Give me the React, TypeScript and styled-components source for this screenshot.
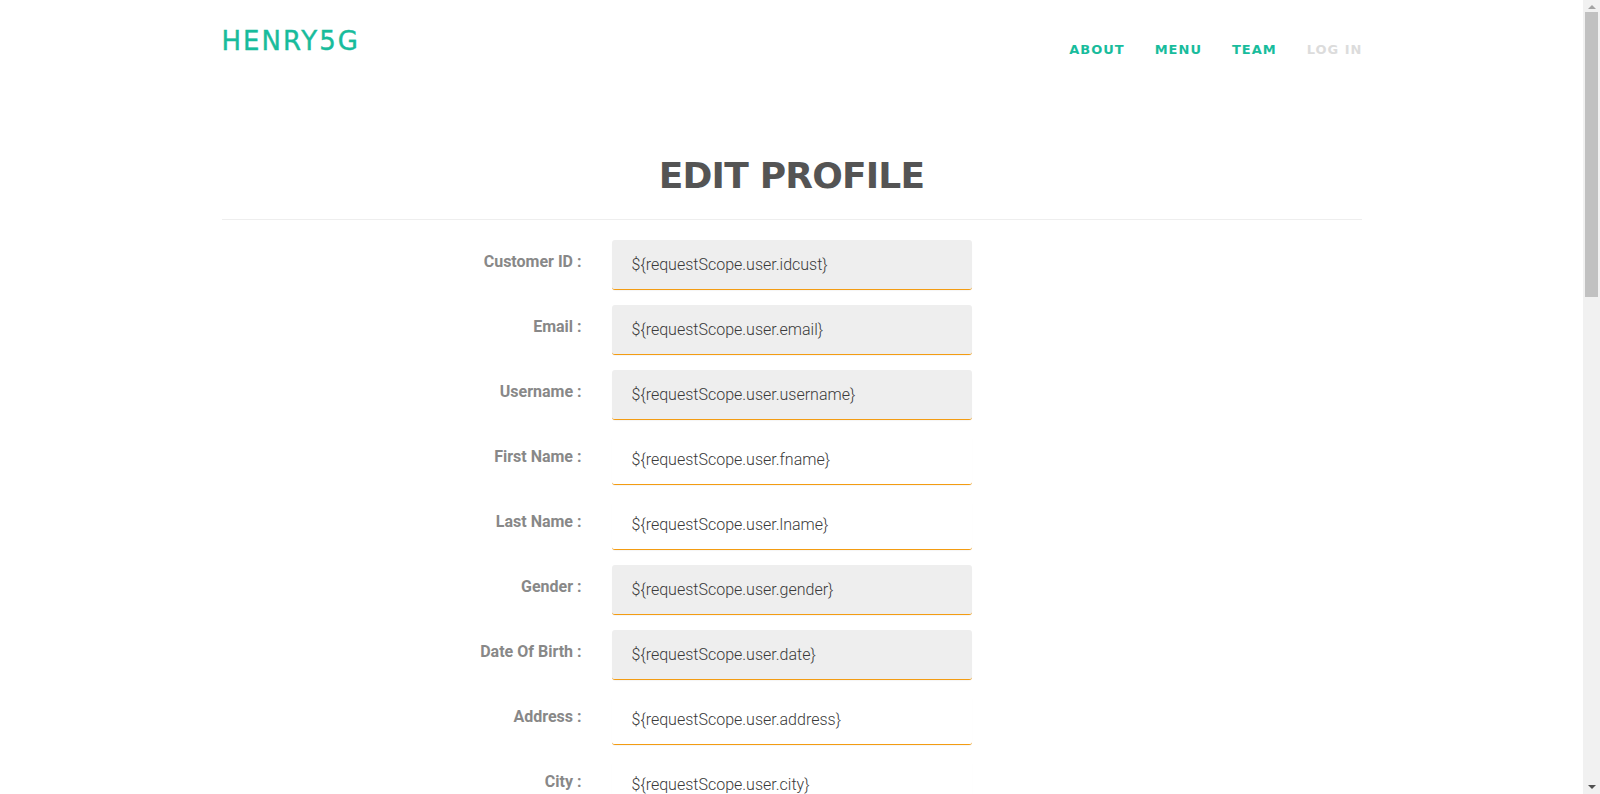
import styled, { createGlobalStyle } from "styled-components";

const GlobalStyle = createGlobalStyle`
  html, body {
    margin: 0;
    padding: 0;
    background: #fff;
  }
  body {
    font-family: Roboto, "Liberation Sans", sans-serif;
  }
  * {
    box-sizing: border-box;
  }
`;

// leaves room for the window scrollbar on the right
const Page = styled.div`
  padding-right: 17px;
`;

const Container = styled.div`
  width: 1140px;
  margin: 0 auto;
`;

const Header = styled.header`
  display: flex;
  justify-content: space-between;
  align-items: flex-start;
  height: 140px;
`;

const Brand = styled.a`
  margin-top: 28px;
  font-family: "DejaVu Sans", sans-serif;
  font-size: 26px;
  line-height: 1;
  letter-spacing: 2px;
  color: #18bc9c;
  -webkit-text-stroke: 0.4px #18bc9c;
  text-decoration: none;
`;

const Nav = styled.nav`
  display: flex;
  gap: 30px;
  margin-top: 43px;
`;

const NavLink = styled.a<{ $muted?: boolean }>`
  font-family: "DejaVu Sans", sans-serif;
  font-weight: bold;
  font-size: 13px;
  line-height: 1;
  letter-spacing: 1px;
  color: ${(p) => (p.$muted ? "#dcdcdc" : "#18bc9c")};
  text-decoration: none;
  &:last-child {
    margin-right: -1px;
  }
`;

const Title = styled.h1`
  margin: 18px 0 0;
  text-align: center;
  font-family: "DejaVu Sans", sans-serif;
  font-weight: bold;
  font-size: 36px;
  line-height: 1;
  letter-spacing: -0.8px;
  color: #545454;
  padding-bottom: 25px;
  border-bottom: 1px solid #eee;
`;

const Form = styled.form`
  display: flex;
  flex-direction: column;
  gap: 15px;
  padding-top: 20px;
`;

const Row = styled.div`
  display: grid;
  grid-template-columns: 360px 360px;
  column-gap: 30px;
`;

const Label = styled.label`
  padding-top: 11px;
  text-align: right;
  font-family: Roboto, sans-serif;
  font-weight: bold;
  font-size: 16px;
  line-height: 22px;
  color: #888;
`;

const Field = styled.div<{ $readonly?: boolean }>`
  height: 50px;
  display: flex;
  align-items: center;
  padding: 0 20px;
  border-radius: 3px;
  background: ${(p) => (p.$readonly ? "#eeeeee" : "#fff")};
  border-bottom: 1px solid #f39c12;
  box-shadow: 0 1px 1px rgba(0, 0, 0, 0.04);
  font-family: Roboto, sans-serif;
  font-weight: 300;
  font-size: 16px;
  color: #3a3a3a;
`;

const ButtonRow = styled.div`
  display: grid;
  grid-template-columns: 360px 360px;
  column-gap: 30px;
  padding: 20px 0 60px;
`;

const SaveButton = styled.button`
  grid-column: 2;
  height: 46px;
  border: none;
  border-radius: 3px;
  background: #18bc9c;
  color: #fff;
  font-family: "DejaVu Sans", sans-serif;
  font-weight: bold;
  font-size: 14px;
  letter-spacing: 1px;
`;

const Footer = styled.footer`
  background: #2c3e50;
  color: #fff;
  height: 560px;
  display: flex;
  align-items: center;
  justify-content: center;
  font-family: "DejaVu Sans", sans-serif;
  font-size: 14px;
`;

const ScrollTrack = styled.div`
  position: fixed;
  top: 0;
  right: 0;
  width: 17px;
  height: 100vh;
  background: #f1f1f1;
  display: flex;
  flex-direction: column;
  align-items: center;
`;

const Arrow = styled.div<{ $down?: boolean }>`
  width: 0;
  height: 0;
  margin: ${(p) => (p.$down ? "auto 0 5px" : "5px 0 3px")};
  border-left: 4px solid transparent;
  border-right: 4px solid transparent;
  ${(p) =>
    p.$down
      ? "border-top: 4px solid #505050;"
      : "border-bottom: 4px solid #a3a3a3;"}
`;

const ScrollThumb = styled.div`
  width: 13px;
  height: 285px;
  background: #c1c1c1;
`;

const fields: { label: string; value: string; readonly?: boolean }[] = [
  { label: "Customer ID :", value: "idcust", readonly: true },
  { label: "Email :", value: "email", readonly: true },
  { label: "Username :", value: "username", readonly: true },
  { label: "First Name :", value: "fname" },
  { label: "Last Name :", value: "lname" },
  { label: "Gender :", value: "gender", readonly: true },
  { label: "Date Of Birth :", value: "date", readonly: true },
  { label: "Address :", value: "address" },
  { label: "City :", value: "city" },
  { label: "State :", value: "state" },
  { label: "Country :", value: "country" },
  { label: "Zip Code :", value: "zip" },
  { label: "Phone :", value: "phone" },
  { label: "Password :", value: "password" },
];

export default function App() {
  return (
    <>
      <GlobalStyle />
      <Page>
        <Container>
          <Header>
            <Brand href="#">HENRY5G</Brand>
            <Nav>
              <NavLink href="#">ABOUT</NavLink>
              <NavLink href="#">MENU</NavLink>
              <NavLink href="#">TEAM</NavLink>
              <NavLink href="#" $muted>
                LOG IN
              </NavLink>
            </Nav>
          </Header>
          <Title>EDIT PROFILE</Title>
          <Form>
            {fields.map((f) => (
              <Row key={f.value}>
                <Label>{f.label}</Label>
                <Field $readonly={f.readonly}>
                  {"${requestScope.user." + f.value + "}"}
                </Field>
              </Row>
            ))}
          </Form>
          <ButtonRow>
            <SaveButton type="button">SAVE CHANGES</SaveButton>
          </ButtonRow>
        </Container>
        <Footer>© HENRY5G</Footer>
      </Page>
      <ScrollTrack>
        <Arrow />
        <ScrollThumb />
        <Arrow $down />
      </ScrollTrack>
    </>
  );
}
